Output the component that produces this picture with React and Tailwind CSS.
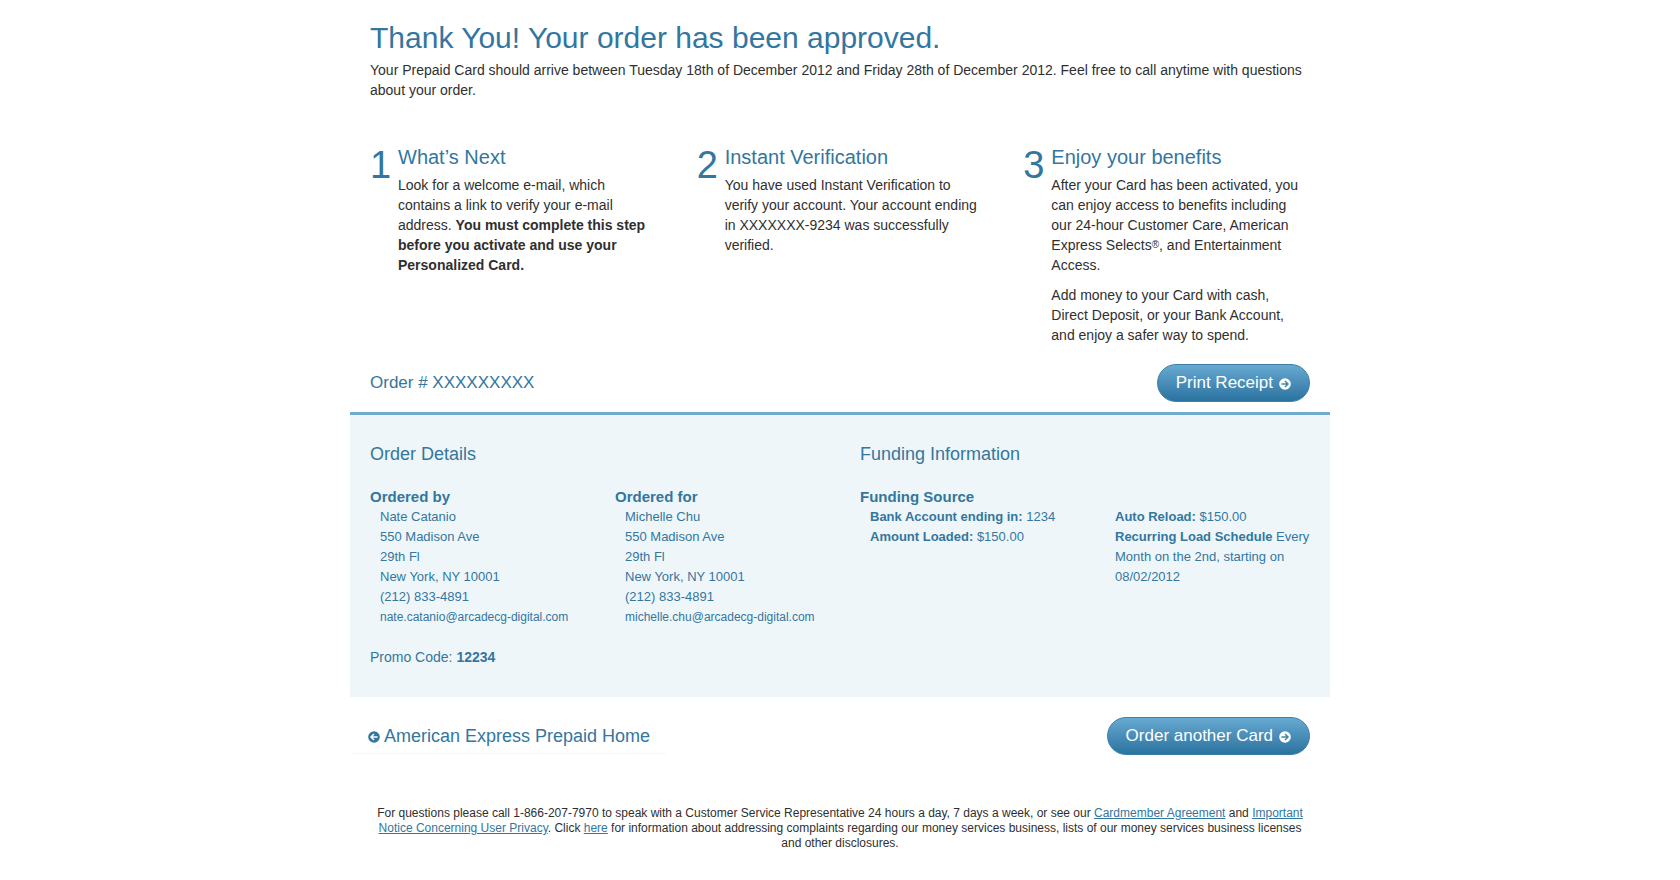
function ArrowIcon({ className = '' }) {
  return (
    <svg viewBox="0 0 12 12" aria-hidden="true" className={`size-3 shrink-0 ${className}`}>
      <circle cx="6" cy="6" r="5.8" fill="currentColor" />
      <path d="M2.4 6h6.4M6 3l3 3-3 3" fill="none" className="stroke-(--arrow)" strokeWidth="1.5" />
    </svg>
  );
}

function PillButton({ children }) {
  return (
    <button
      type="button"
      className="flex h-[38px] items-center gap-1.5 rounded-full border border-[#3c80aa] bg-linear-to-b from-[#67a9d1] to-[#2a73a0] px-[18px] text-[17px] text-white [--arrow:#3f86b3]"
    >
      {children}
      <ArrowIcon className="mt-0.5" />
    </button>
  );
}

function Step({ number, title, children }) {
  return (
    <section className="flex pl-5 pr-6">
      <span className="w-7 shrink-0 text-[38px] leading-[44px] text-[#33769e]">{number}</span>
      <div className="flex-1">
        <h2 className="mb-1 text-[20px] leading-7 text-[#33769e]">{title}</h2>
        <div className="flex flex-col gap-2.5">{children}</div>
      </div>
    </section>
  );
}

function Contact({ title, lines, email }) {
  return (
    <div className="pl-5">
      <h3 className="text-[15px] font-bold leading-5">{title}</h3>
      <address className="pl-2.5 text-[13px] not-italic leading-5">
        {lines.map((line) => (
          <div key={line}>{line}</div>
        ))}
        <div className="text-[12px]">{email}</div>
      </address>
    </div>
  );
}

export default function App() {
  return (
    <main className="mx-auto max-w-[980px] bg-white pb-8 pt-4 font-['Liberation_Sans',Arial,sans-serif] text-[14px] leading-5 text-[#2f2f2f]">
      <header className="px-5">
        <h1 className="text-[30px] leading-[44px] text-[#33769e]">
          Thank You! Your order has been approved.
        </h1>
        <p>
          Your Prepaid Card should arrive between Tuesday 18th of December 2012 and Friday 28th of
          December 2012. Feel free to call anytime with questions about your order.
        </p>
      </header>

      <div className="mt-[43px] grid grid-cols-3">
        <Step number="1" title="What’s Next">
          <p>
            Look for a welcome e-mail, which contains a link to verify your e-mail address.{' '}
            <strong>You must complete this step before you activate and use your Personalized Card.</strong>
          </p>
        </Step>
        <Step number="2" title="Instant Verification">
          <p>
            You have used Instant Verification to verify your account. Your account ending in
            XXXXXXX-9234 was successfully verified.
          </p>
        </Step>
        <Step number="3" title="Enjoy your benefits">
          <p>
            After your Card has been activated, you can enjoy access to benefits including our
            24-hour Customer Care, American Express Selects
            <span className="align-[2px] text-[10px] leading-none">®</span>, and Entertainment
            Access.
          </p>
          <p>
            Add money to your Card with cash, Direct Deposit, or your Bank Account, and enjoy a
            safer way to spend.
          </p>
        </Step>
      </div>

      <div className="mb-2.5 mt-[19px] flex items-center justify-between px-5">
        <h2 className="text-[17px] text-[#33769e]">Order # XXXXXXXXX</h2>
        <PillButton>Print Receipt</PillButton>
      </div>

      <div className="grid grid-cols-4 border-t-3 border-[#6faccf] bg-[#eff6fa] pb-[30px] pt-[25px] text-[#33769e]">
        <h2 className="col-span-2 mb-[19px] pl-5 text-[18px] leading-7">Order Details</h2>
        <h2 className="col-span-2 mb-[19px] pl-5 text-[18px] leading-7">Funding Information</h2>
        <Contact
          title="Ordered by"
          lines={['Nate Catanio', '550 Madison Ave', '29th Fl', 'New York, NY 10001', '(212) 833-4891']}
          email="nate.catanio@arcadecg-digital.com"
        />
        <Contact
          title="Ordered for"
          lines={['Michelle Chu', '550 Madison Ave', '29th Fl', 'New York, NY 10001', '(212) 833-4891']}
          email="michelle.chu@arcadecg-digital.com"
        />
        <div className="pl-5 text-[13px] leading-5">
          <h3 className="text-[15px] font-bold leading-5">Funding Source</h3>
          <div className="pl-2.5">
            <p><strong>Bank Account ending in:</strong> 1234</p>
            <p><strong>Amount Loaded:</strong> $150.00</p>
          </div>
        </div>
        <div className="pl-[30px] pr-4 pt-5 text-[13px] leading-5">
          <p><strong>Auto Reload:</strong> $150.00</p>
          <p><strong>Recurring Load Schedule</strong> Every Month on the 2nd, starting on 08/02/2012</p>
        </div>
        <p className="col-span-4 mt-5 pl-5">
          Promo Code: <strong>12234</strong>
        </p>
      </div>

      <div className="mt-5 flex items-center justify-between pl-0.5 pr-5">
        <a
          href="#home"
          className="flex h-9 items-center gap-1 border-b border-[#f5f7f9] px-4 text-[18px] text-[#33769e] [--arrow:#ffffff]"
        >
          <ArrowIcon className="mt-0.5 rotate-180" />
          American Express Prepaid Home
        </a>
        <PillButton>Order another Card</PillButton>
      </div>

      <footer className="mt-[51px] px-5 text-center text-[12px] leading-[15px]">
        For questions please call 1-866-207-7970 to speak with a Customer Service Representative 24
        hours a day, 7 days a week, or see our{' '}
        <a href="#agreement" className="text-[#33769e] underline">Cardmember Agreement</a> and{' '}
        <a href="#privacy" className="text-[#33769e] underline">Important Notice Concerning User Privacy</a>.
        Click <a href="#complaints" className="text-[#33769e] underline">here</a> for information
        about addressing complaints regarding our money services business, lists of our money
        services business licenses and other disclosures.
      </footer>
    </main>
  );
}
